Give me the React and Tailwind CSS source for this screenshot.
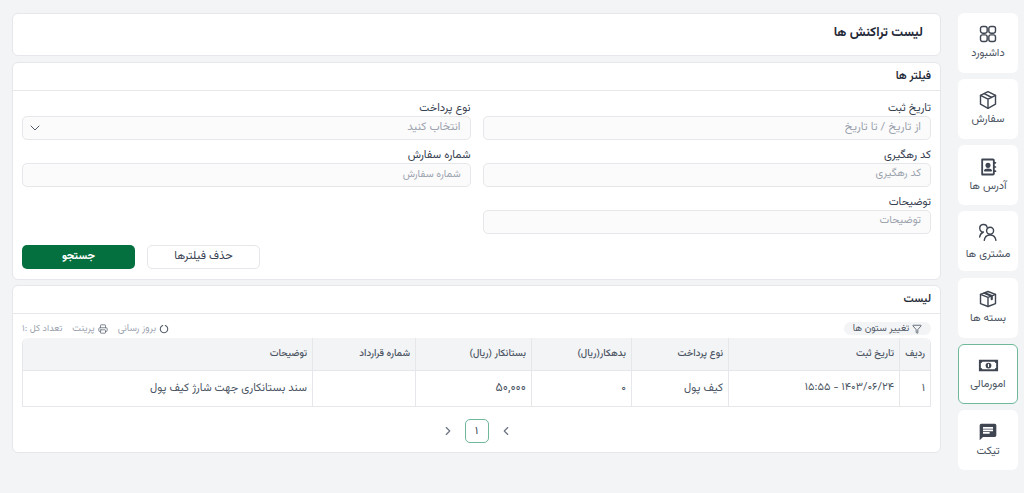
import React from "react";
import { ChevronDown, Funnel, Printer, ChevronLeft, ChevronRight } from "lucide-react";

const Icon = ({ children }) => (
  <svg width="20" height="20" viewBox="0 0 24 24" fill="none" stroke="#3f4652" strokeWidth="1.700" strokeLinecap="round" strokeLinejoin="round">
    {children}
  </svg>
);

const nav = [
  ["داشبورد", <Icon><rect x="3" y="3" width="8" height="8" rx="2.500"/><rect x="13" y="3" width="8" height="8" rx="2.500"/><rect x="3" y="13" width="8" height="8" rx="2.500"/><rect x="13" y="13" width="8" height="8" rx="2.500"/></Icon>],
  ["سفارش", <Icon><path d="M12 2 21 6.500V17L12 22 3 17V6.500Z"/><path d="M3 6.500 12 11l9-4.500M12 11v11M7.500 4.300l9 4.700"/></Icon>],
  ["آدرس ها", <Icon><path d="M5 3h13a1 1 0 0 1 1 1v16a1 1 0 0 1-1 1H5Z" strokeWidth="2.200"/><circle cx="12" cy="10" r="2.200" fill="#3f4652"/><path d="M8 16.500c.5-2.500 7.500-2.500 8 0Z" fill="#3f4652"/><path d="M19 7h2M19 12h2M19 17h2" strokeWidth="2"/></Icon>],
  ["مشتری ها", <Icon><circle cx="14.500" cy="10.500" r="4.200"/><path d="M7.500 22c.5-4 3.200-6.500 7-6.500s6.500 2.500 7 6.500"/><path d="M11 6.500A4.500 4.500 0 1 0 6.500 12C4 13 2.500 15 2 18"/></Icon>],
  ["بسته ها", <Icon><path d="M12 3 21 6.500V17.500L12 21 3 17.500V6.500Z"/><path d="M3 6.500 12 10l9-3.500M12 10v11"/><path d="M8 4.800l8.500 3.500v4" strokeWidth="2.600"/></Icon>],
  ["امورمالی", <svg width="23" height="23" viewBox="0 0 24 24"><path fillRule="evenodd" fill="#3f4652" d="M2 6h20v12H2ZM4 9.500A1.500 1.500 0 0 0 5.500 8h13A1.500 1.500 0 0 0 20 9.500v5a1.500 1.500 0 0 0-1.500 1.500h-13A1.500 1.500 0 0 0 4 14.500Z"/><circle cx="12" cy="12" r="3" fill="#3f4652"/><rect x="11.400" y="10.300" width="1.200" height="3.400" fill="#fff"/></svg>],
  ["تیکت", <svg width="20" height="20" viewBox="0 0 24 24" fill="#3f4652"><path d="M20 2H4a2 2 0 0 0-2 2v18l4-4h14a2 2 0 0 0 2-2V4a2 2 0 0 0-2-2ZM6 9h12v2H6Zm8 5H6v-2h8Zm4-6H6V6h12Z"/></svg>],
];

const Field = ({ label, placeholder, select, size = "text-[11.500px]" }) => (
  <div className="flex flex-col">
    <label className="text-[11.200px] leading-[13px] text-[#374151] h-[14px]">{label}</label>
    <div className={`h-[24px] flex items-center justify-between pr-[9px] rounded-[5px] border border-[#e5e7eb] bg-[#fbfbfb] text-[#9ca3af] ${size} ${select ? "pl-[4px]" : "pl-[9px]"}`}>
      <span>{placeholder}</span>
      {select && <ChevronDown size={16} strokeWidth={1.300} className="text-[#374151]" />}
    </div>
  </div>
);

const cols = [
  ["ردیف", "۱", "w-[31px]", "text-[11.300px]"],
  ["تاریخ ثبت", "۱۴۰۳/۰۶/۲۴ - ۱۵:۵۵", "w-[171px]", "text-[11px]"],
  ["نوع پرداخت", "کیف پول", "w-[97px]", "text-[11.300px]"],
  ["بدهکار(ریال)", "۰", "w-[100px]", "text-[11.300px]"],
  ["بستانکار (ریال)", "۵۰,۰۰۰", "w-[116px]", "text-[12.300px]"],
  ["شماره قرارداد", "", "w-[103px]", "text-[11.300px]"],
  ["توضیحات", "سند بستانکاری جهت شارژ کیف پول", "flex-1", "text-[11.300px]"],
];

export default function App() {
  return (
    <div dir="rtl" className="h-[493px] w-[1024px] overflow-hidden bg-[#f3f4f6] flex gap-[17px] pt-[12.500px] pr-[6px] pl-[12px] font-['Vazirmatn','Noto_Sans_Arabic','DejaVu_Sans',sans-serif] text-[#374151]">
      <nav className="w-[60px] shrink-0 flex flex-col gap-[6.300px]">
        {nav.map(([label, icon], i) => (
          <div key={label} className={`h-[60px] rounded-[6px] flex flex-col items-center justify-center bg-white text-[11px] leading-[14px] text-[#4b5563] ${i === 3 ? "gap-[7px] pt-[2px]" : "gap-[4px]"} ${i === 5 ? "border border-[#6fb89a]" : ""}`}>
            <div className="h-[20px] flex items-center">{icon}</div>
            <span className="-mt-[1px]">{label}</span>
          </div>
        ))}
      </nav>

      <main className="flex-1 flex flex-col min-w-0">
        <section className="h-[43px] shrink-0 bg-white rounded-[6px] border border-[#e5e7eb] flex items-center pr-[17px]">
          <h1 className="text-[13px] font-bold text-[#1f2937]">لیست تراکنش ها</h1>
        </section>

        <section className="h-[218px] mt-[6px] shrink-0 bg-white rounded-[6px] border border-[#e5e7eb]">
          <div className="h-[28px] flex items-center px-[9px] border-b border-[#e5e7eb] text-[11.300px] font-semibold text-[#1f2937]">فیلتر ها</div>
          <div className="px-[9px] pt-[11px]">
            <div className="grid grid-cols-2 gap-x-[12px] gap-y-[9px]">
              <Field label="تاریخ ثبت" placeholder="از تاریخ / تا تاریخ" />
              <Field label="نوع پرداخت" placeholder="انتخاب کنید" select />
              <Field label="کد رهگیری" placeholder="کد رهگیری" size="text-[10.800px]" />
              <Field label="شماره سفارش" placeholder="شماره سفارش" size="text-[10.300px]" />
              <Field label="توضیحات" placeholder="توضیحات" size="text-[11px]" />
            </div>
            <div className="flex justify-end gap-[12px] mt-[11px]">
              <button className="w-[113px] h-[24px] pt-[1px] rounded-[5px] border border-[#e5e7eb] bg-white text-[11.500px] text-[#374151]">حذف فیلترها</button>
              <button className="w-[113px] h-[24px] pt-[2px] rounded-[5px] bg-[#04703f] text-white text-[11px] font-bold">جستجو</button>
            </div>
          </div>
        </section>

        <section className="h-[167.500px] mt-[5.500px] shrink-0 bg-white rounded-[6px] border border-[#e5e7eb] flex flex-col">
          <div className="h-[28px] shrink-0 flex items-center px-[9px] border-b border-[#e5e7eb] text-[11.300px] font-semibold text-[#1f2937]">لیست</div>
          <div className="px-[9px] pt-[8px]">
            <div className="h-[16px] flex items-start justify-between text-[9.700px] leading-[13px] text-[#9ca3af]">
              <div className="h-[13px] w-[87px] rounded-full bg-[#f3f4f6] flex items-center justify-center gap-[3px] text-[#4b5563]">
                <Funnel size={10} /><span>تغییر ستون ها</span>
              </div>
              <div className="flex items-center gap-[10px] h-[13px]">
                <span className="flex items-center gap-[3px]">
                  <svg width="10" height="10" viewBox="0 0 24 24" fill="none" stroke="#4b5563" strokeWidth="2.500" strokeLinecap="round"><path d="M9 3.500a9 9 0 1 0 6 0"/></svg>
                  بروز رسانی
                </span>
                <span className="flex items-center gap-[3px]"><Printer size={10} className="text-[#6b7280]" />پرینت</span>
                <span className="text-[9.300px]">تعداد کل :۱</span>
              </div>
            </div>
            <div className="border border-t-0 border-[#e5e7eb] rounded-t-[6px] overflow-hidden">
              <div className="flex h-[33px] bg-[#f3f4f6] border-b border-[#e5e7eb] rounded-t-[6px]">
                {cols.map(([h, , w], i) => (
                  <div key={h} className={`${w} flex items-center px-[5px] text-[9.800px] font-medium text-[#4b5563] ${i < 6 ? "border-l border-[#e5e7eb]" : ""}`}>{h}</div>
                ))}
              </div>
              <div className="flex h-[35px]">
                {cols.map(([h, v, w, s], i) => (
                  <div key={h} className={`${w} ${s} flex items-center px-[5px] text-[#4b5563] ${i < 6 ? "border-l border-[#e5e7eb]" : ""}`}>{v}</div>
                ))}
              </div>
            </div>
            <div className="flex items-center justify-center gap-[10px] mt-[12px]">
              <ChevronLeft size={14} className="text-[#6b7280]" />
              <div className="w-[24px] h-[24px] pt-[2px] rounded-[5px] border border-[#6fb89a] flex items-center justify-center text-[11px] text-[#374151]">۱</div>
              <ChevronRight size={14} className="text-[#6b7280]" />
            </div>
          </div>
        </section>
      </main>
    </div>
  );
}
